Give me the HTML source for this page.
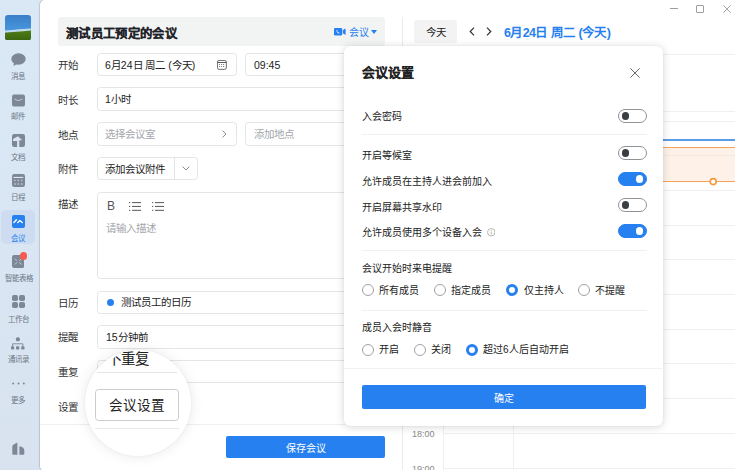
<!DOCTYPE html>
<html lang="zh-CN">
<head>
<meta charset="utf-8">
<style>
*{box-sizing:border-box;margin:0;padding:0}
html,body{width:735px;height:470px;overflow:hidden;background:#d9e4f0;font-family:"Liberation Sans",sans-serif;color:#222}
.a{position:absolute}
#side{left:0;top:0;width:40px;height:470px;background:linear-gradient(180deg,#dae8f6 0%,#d8e3ef 100%)}
.ic{position:absolute;left:12px;width:13px;height:13px}
.lb{position:absolute;left:0;width:36px;text-align:center;font-size:7.5px;line-height:8px;color:#6b7686;white-space:nowrap}
#main{left:40px;top:0;width:700px;height:471px;background:#fff;border-radius:5px;box-shadow:-1px 0 1px rgba(0,0,0,.14)}
.lab{position:absolute;left:58px;font-size:10.5px;line-height:12px;color:#333;white-space:nowrap}
.box{position:absolute;border:1px solid #e4e5e7;border-radius:3.5px;background:#fff}
.tx{position:absolute;font-size:10.5px;line-height:12px;color:#222;white-space:nowrap}
.ph{color:#a3a6ab}
.hl{position:absolute;height:1px;background:#eff0f0}
.vl{position:absolute;width:1px;background:#eeeff0}
#pop{left:344px;top:45.5px;width:318.5px;height:380px;background:#fff;border-radius:6px;box-shadow:0 1px 8px rgba(0,0,0,.16),0 0 1px rgba(0,0,0,.12)}
.pt{position:absolute;left:18px;font-size:10px;line-height:12px;color:#222;white-space:nowrap}
.tg{position:absolute;left:273.5px;width:29px;height:14.5px;border-radius:8px;border:1px solid #8f9398;background:#fff}
.tg i{position:absolute;left:3.3px;top:2.45px;width:7.6px;height:7.6px;border-radius:50%;background:#3a3d42}
.tg.on{background:#2680f0;border-color:#2680f0}
.tg.on i{left:17.2px;background:#fff}
.rd{position:absolute;width:12px;height:12px;margin:-0.2px 0 0 -0.5px;border-radius:50%;border:1px solid #9fa2a6;background:#fff}
.rd.on{border:3.7px solid #2680f0}
.rt{position:absolute;font-size:10px;line-height:12px;color:#222;white-space:nowrap}
</style>
</head>
<body>
<!-- sidebar -->
<div id="side" class="a">
  <svg class="a" style="left:5px;top:14.5px" width="26" height="25.5" viewBox="0 0 26 25.5"><defs><linearGradient id="sky" x1="0" y1="0" x2="0" y2="1"><stop offset="0" stop-color="#3a7fc8"/><stop offset="0.6" stop-color="#4796dd"/></linearGradient><linearGradient id="gr" x1="0" y1="0" x2="0" y2="1"><stop offset="0" stop-color="#4f7d16"/><stop offset="1" stop-color="#3c6410"/></linearGradient><clipPath id="cp"><rect x="0" y="0" width="26" height="25.5" rx="3"/></clipPath></defs><g clip-path="url(#cp)"><rect x="0" y="0" width="26" height="25.5" fill="url(#sky)"/><path d="M0 15.5 Q8 15 14 14.2 L26 13.5 V17 L0 17.8Z" fill="#d8e6f0" opacity="0.85"/><path d="M0 17.8 Q10 17.2 26 15.6 V25.5 H0Z" fill="url(#gr)"/></g></svg>

  <svg class="ic" style="top:53px;left:11px;width:15px;height:13px" viewBox="0 0 15 13"><ellipse cx="7.5" cy="6" rx="7.2" ry="5.8" fill="#7d8796"/><path d="M3 9.5 L2.5 13 L7 10.5Z" fill="#7d8796"/></svg>
  <div class="lb" style="top:73px">消息</div>

  <svg class="ic" style="top:94px" viewBox="0 0 13 12"><rect x="0" y="0" width="13" height="12" rx="2" fill="#7d8796"/><path d="M2.8 4.6 Q6.5 7.6 10.2 4.6" stroke="#c9d3de" stroke-width="0.9" fill="none" stroke-linecap="round"/></svg>
  <div class="lb" style="top:113px">邮件</div>

  <svg class="ic" style="top:134px" viewBox="0 0 13 13"><rect x="0" y="0" width="13" height="13" rx="2.2" fill="#7d8796"/><path d="M1 5.6 Q1 4.9 1.6 4.7 L5.9 2.3 L10.3 6.3 H7.3 V13 H5.1 V7 H1.6 Q1 7 1 6.4Z" fill="#dbe5f0"/></svg>
  <div class="lb" style="top:154px">文档</div>

  <svg class="ic" style="top:174px" viewBox="0 0 13 13"><rect x="0" y="0" width="13" height="13" rx="2.2" fill="#7d8796"/><rect x="1.3" y="2.9" width="10" height="1.1" fill="#dbe5f0"/><g fill="#b9c3cf"><rect x="2.1" y="5.7" width="1.6" height="1.4"/><rect x="5.5" y="5.7" width="1.6" height="1.4"/><rect x="8.9" y="5.7" width="1.6" height="1.4"/><rect x="2.1" y="9.2" width="1.6" height="1.6"/><rect x="5.5" y="9.2" width="1.6" height="1.6"/><rect x="8.9" y="9.2" width="1.6" height="1.6"/></g></svg>
  <div class="lb" style="top:194px">日程</div>

  <div class="a" style="left:1px;top:210px;width:34px;height:34px;border-radius:5px;background:#cddcf1"></div>
  <svg class="ic" style="top:215px" viewBox="0 0 13 13"><rect x="0" y="0" width="13" height="13" rx="2" fill="#2680f0"/><path d="M1.9 7.5 L4.4 4.8 M5.7 7.5 L7.9 5.5 L10.2 7.5" stroke="#fff" stroke-width="1.4" fill="none" stroke-linecap="round" stroke-linejoin="round"/></svg>
  <div class="lb" style="top:235px;color:#2680f0">会议</div>

  <svg class="ic" style="top:255px;left:11.8px;width:12.4px;height:13px" viewBox="0 0 12.4 13"><rect x="0" y="0" width="12.4" height="13" rx="2.2" fill="#7d8796"/><path d="M3 4 L4.9 5.5 M9.4 4 L7.5 5.5 M3 9.2 L4.9 7.6 M9.4 9.2 L7.5 7.6" stroke="#c5ced9" stroke-width="0.9" stroke-linecap="round"/></svg>
  <div class="a" style="left:19.95px;top:252.35px;width:7.5px;height:7.5px;border-radius:50%;background:#f75a4f"></div>
  <div class="lb" style="top:275px;left:-1px;width:39px">智能表格</div>

  <svg class="ic" style="top:295px" viewBox="0 0 13 13"><g fill="#7d8796"><rect x="0" y="0" width="6" height="6" rx="1.8"/><rect x="7" y="0" width="6" height="6" rx="1.8"/><rect x="0" y="7" width="6" height="6" rx="1.8"/><rect x="7" y="7" width="6" height="6" rx="1.8"/></g></svg>
  <div class="lb" style="top:316px">工作台</div>

  <svg class="ic" style="top:336.5px;left:11px;width:14px;height:13px" viewBox="0 0 14 13"><g fill="#7d8796"><rect x="4.9" y="0.3" width="4" height="4" rx="1.6"/><rect x="0" y="9.3" width="3.2" height="3.3" rx="0.8"/><rect x="5" y="9.3" width="3.3" height="3.3" rx="0.8"/><rect x="10.2" y="9.3" width="3.3" height="3.3" rx="0.8"/></g><path d="M1.6 9.5 V6.8 H11.9 V9.5" stroke="#7d8796" stroke-width="0.9" fill="none"/></svg>
  <div class="lb" style="top:356px">通讯录</div>

  <svg class="ic" style="top:377px" viewBox="0 0 13 4"><g fill="#7d8796"><circle cx="1.2" cy="2" r="1"/><circle cx="6.5" cy="2" r="1"/><circle cx="11.8" cy="2" r="1"/></g></svg>
  <div class="lb" style="top:397px">更多</div>

  <svg class="ic" style="top:442px;left:11.7px" viewBox="0 0 13 13"><path d="M0.3 4.6 Q0.5 3.2 2 2.3 L5.4 0.6 V12.7 H1.3 Q0.3 12.7 0.3 11.7Z M7.4 4.3 Q12.3 4.9 12.3 8.6 V11.7 Q12.3 12.7 11.3 12.7 H7.4Z" fill="#7d8796"/></svg>
</div>

<div id="main" class="a"></div>

<!-- form panel -->
<div class="a" style="left:58px;top:17px;width:327px;height:29px;border-radius:3px;background:#f2f3f3"></div>
<div class="tx" style="left:66px;top:26.6px;font-size:12.4px;letter-spacing:0.35px;line-height:15px;font-weight:bold;-webkit-text-stroke:0.15px #1f2329;color:#1f2329">测试员工预定的会议</div>
<svg class="a" style="left:334px;top:28px" width="12" height="7.5" viewBox="0 0 12 7.5"><rect x="0" y="0" width="8.2" height="7.5" rx="1.3" fill="#2680f0"/><path d="M8.7 3.75 Q8.7 1.3 11.6 0.8 V6.7 Q8.7 6.2 8.7 3.75Z" fill="#2680f0"/><path d="M2.6 1.9 Q2.1 2.5 2.9 3.9 Q3.9 5.4 5.1 5.6 L5.6 5.1 L4.7 4.3 L4.3 4.6 Q3.5 4 3.3 3.2 L3.6 2.8 Z" fill="#fff"/></svg>
<div class="tx" style="left:349px;top:26.8px;font-size:10px;color:#2680f0">会议</div>
<svg class="a" style="left:371px;top:30px" width="6" height="4" viewBox="0 0 6 4"><path d="M0 0 H6 L3 4Z" fill="#2680f0"/></svg>

<div class="lab" style="top:59px">开始</div>
<div class="box" style="left:97px;top:53px;width:140px;height:23px"></div>
<div class="tx" style="left:105px;top:59px">6月24日 周二 (今天)</div>
<svg class="a" style="left:217px;top:60px" width="10" height="10" viewBox="0 0 10 10"><rect x="0.45" y="0.45" width="8.9" height="8.9" rx="1.6" fill="none" stroke="#5a5d62" stroke-width="0.9"/><path d="M0.5 2.5 H9.3" stroke="#5a5d62" stroke-width="1"/><g fill="#6a6d72"><circle cx="2.5" cy="4.5" r="0.6"/><circle cx="4.6" cy="4.5" r="0.6"/><circle cx="6.6" cy="4.5" r="0.6"/><circle cx="2.5" cy="6.5" r="0.6"/><circle cx="4.6" cy="6.5" r="0.6"/><circle cx="6.6" cy="6.5" r="0.6"/></g></svg>
<div class="box" style="left:245px;top:53px;width:140px;height:23px"></div>
<div class="tx" style="left:254px;top:59px">09:45</div>

<div class="lab" style="top:94px">时长</div>
<div class="box" style="left:97px;top:87px;width:288px;height:24px"></div>
<div class="tx" style="left:105px;top:93px">1小时</div>

<div class="lab" style="top:129px">地点</div>
<div class="box" style="left:97px;top:122px;width:140px;height:24px"></div>
<div class="tx ph" style="left:105px;top:128px">选择会议室</div>
<svg class="a" style="left:222px;top:130px" width="5" height="8" viewBox="0 0 5 8"><path d="M0.7 0.7 L4 4 L0.7 7.3" stroke="#8a8d92" stroke-width="1" fill="none"/></svg>
<div class="box" style="left:245px;top:122px;width:140px;height:24px"></div>
<div class="tx ph" style="left:254px;top:128px">添加地点</div>

<div class="lab" style="top:163px">附件</div>
<div class="box" style="left:97px;top:157px;width:101px;height:23px"></div>
<div class="vl" style="left:174px;top:158px;height:21px;background:#e4e5e7"></div>
<div class="tx" style="left:105px;top:163px">添加会议附件</div>
<svg class="a" style="left:182px;top:166px" width="8" height="5" viewBox="0 0 8 5"><path d="M0.7 0.7 L4 4 L7.3 0.7" stroke="#8a8d92" stroke-width="1" fill="none"/></svg>

<div class="lab" style="top:198px">描述</div>
<div class="box" style="left:97px;top:192px;width:288px;height:87px"></div>
<div class="tx" style="left:107px;top:200px;font-size:12px;line-height:13px;color:#555">B</div>
<svg class="a" style="left:129px;top:202px" width="12" height="9" viewBox="0 0 12 9"><g fill="#666"><rect x="0" y="0" width="1.3" height="1.1"/><rect x="0" y="3.9" width="1.3" height="1.1"/><rect x="0" y="7.8" width="1.3" height="1.1"/><rect x="3" y="0" width="9" height="1.1"/><rect x="3" y="3.9" width="9" height="1.1"/><rect x="3" y="7.8" width="9" height="1.1"/></g></svg>
<svg class="a" style="left:152px;top:202px" width="12" height="9" viewBox="0 0 12 9"><g fill="#666"><rect x="0" y="0" width="1.3" height="1.1"/><rect x="0" y="3.9" width="1.3" height="1.1"/><rect x="0" y="7.8" width="1.3" height="1.1"/><rect x="3" y="0" width="9" height="1.1"/><rect x="3" y="3.9" width="9" height="1.1"/><rect x="3" y="7.8" width="9" height="1.1"/></g></svg>
<div class="tx ph" style="left:106px;top:222px">请输入描述</div>

<div class="lab" style="top:297px">日历</div>
<div class="box" style="left:97px;top:291px;width:288px;height:23px"></div>
<div class="a" style="left:107px;top:299px;width:7px;height:7px;border-radius:50%;background:#2680f0"></div>
<div class="tx" style="left:121px;top:296px">测试员工的日历</div>

<div class="lab" style="top:331px">提醒</div>
<div class="box" style="left:97px;top:325px;width:288px;height:24px"></div>
<div class="tx" style="left:106px;top:331px">15分钟前</div>

<div class="lab" style="top:366px">重复</div>
<div class="box" style="left:97px;top:360px;width:288px;height:23px"></div>

<div class="lab" style="top:401px">设置</div>

<div class="hl" style="left:40px;top:424px;width:362px;background:#eeeff0"></div>
<div class="a" style="left:226.3px;top:435.6px;width:158.4px;height:22.4px;border-radius:2px;background:#2680f0"></div>
<div class="tx" style="left:226px;top:442.6px;width:159px;text-align:center;color:#fff;font-size:10px">保存会议</div>

<!-- divider -->
<div class="vl" style="left:402px;top:17px;height:453px;background:#ebecee"></div>

<!-- calendar -->
<div class="a" style="left:414px;top:20px;width:43px;height:23px;border-radius:3px;background:#f3f3f4"></div>
<div class="tx" style="left:414px;top:26px;width:43px;text-align:center;font-size:10.5px">今天</div>
<svg class="a" style="left:469px;top:27px" width="6" height="9" viewBox="0 0 6 9"><path d="M5 0.7 L1.2 4.5 L5 8.3" stroke="#333" stroke-width="1.2" fill="none"/></svg>
<svg class="a" style="left:486px;top:27px" width="6" height="9" viewBox="0 0 6 9"><path d="M1 0.7 L4.8 4.5 L1 8.3" stroke="#333" stroke-width="1.2" fill="none"/></svg>
<div class="tx" style="left:504px;top:25.6px;font-size:12.5px;line-height:14px;font-weight:bold;letter-spacing:-0.6px;color:#2680f0">6月24日 周二 (今天)</div>

<div class="hl" style="left:403px;top:54px;width:332px"></div>
<div class="hl" style="left:403px;top:111px;width:332px"></div>
<div class="hl" style="left:443px;top:121px;width:292px"></div>
<div class="hl" style="left:443px;top:190px;width:292px"></div>
<div class="hl" style="left:443px;top:225px;width:292px"></div>
<div class="hl" style="left:443px;top:259px;width:292px"></div>
<div class="hl" style="left:443px;top:294px;width:292px"></div>
<div class="hl" style="left:443px;top:329px;width:292px"></div>
<div class="hl" style="left:443px;top:363px;width:292px"></div>
<div class="hl" style="left:443px;top:398px;width:292px"></div>
<div class="hl" style="left:443px;top:433px;width:292px"></div>
<div class="hl" style="left:443px;top:468px;width:292px"></div>
<div class="vl" style="left:443px;top:111px;height:359px"></div>
<div class="vl" style="left:513px;top:111px;height:359px"></div>
<div class="a" style="left:443px;top:147px;width:292px;height:34px;background:#fdf1e8"></div>
<div class="hl" style="left:443px;top:155px;width:292px;background:#f1e9e2"></div>
<div class="hl" style="left:443px;top:147px;width:292px;background:#f6a35a"></div>
<div class="hl" style="left:443px;top:181px;width:292px;background:#f6a35a"></div>
<svg class="a" style="left:708px;top:176px" width="10" height="11" viewBox="0 0 10 11"><circle cx="5.2" cy="5.6" r="3" fill="#fff" stroke="#f5983f" stroke-width="1.6"/></svg>
<div class="hl" style="left:443px;top:139px;width:292px;height:2px;background:#5a9de8"></div>
<div class="tx" style="left:412px;top:429px;font-size:9px;line-height:10px;color:#888">18:00</div>
<div class="tx" style="left:412px;top:464px;font-size:9px;line-height:10px;color:#888">19:00</div>

<!-- window controls -->
<div class="a" style="left:670.4px;top:8px;width:7.6px;height:1px;background:#9a9da2"></div>
<div class="a" style="left:696.3px;top:5.2px;width:7.7px;height:7.4px;border:1px solid #9a9da2;border-radius:1px"></div>
<svg class="a" style="left:722.5px;top:5px" width="8" height="8" viewBox="0 0 8 8"><path d="M0.4 0.4 L7.6 7.6 M7.6 0.4 L0.4 7.6" stroke="#9a9da2" stroke-width="0.9"/></svg>

<!-- popup -->
<div id="pop" class="a">
  <div class="pt" style="top:19.6px;font-size:13px;line-height:15px;font-weight:bold;-webkit-text-stroke:0.12px #222">会议设置</div>
  <svg class="a" style="left:286.2px;top:22.1px" width="10" height="10" viewBox="0 0 10 10"><path d="M0.4 0.4 L9.6 9.6 M9.6 0.4 L0.4 9.6" stroke="#666a70" stroke-width="1"/></svg>

  <div class="pt" style="top:65px">入会密码</div>
  <div class="tg" style="top:63px"><i></i></div>
  <div class="hl" style="left:18px;top:88px;width:285px"></div>

  <div class="pt" style="top:104px">开启等候室</div>
  <div class="tg" style="top:100px"><i></i></div>
  <div class="pt" style="top:130px">允许成员在主持人进会前加入</div>
  <div class="tg on" style="top:126px"><i></i></div>
  <div class="pt" style="top:156px">开启屏幕共享水印</div>
  <div class="tg" style="top:152px"><i></i></div>
  <div class="pt" style="top:181.7px">允许成员使用多个设备入会</div>
  <svg class="a" style="left:142.5px;top:182.8px" width="8.5" height="8.5" viewBox="0 0 8 8"><circle cx="4" cy="4" r="3.5" fill="none" stroke="#aaa" stroke-width="0.8"/><path d="M4 3.3 V6" stroke="#aaa" stroke-width="0.8"/><circle cx="4" cy="2.2" r="0.5" fill="#aaa"/></svg>
  <div class="tg on" style="top:178px"><i></i></div>
  <div class="hl" style="left:18px;top:204px;width:285px"></div>

  <div class="pt" style="top:217.5px">会议开始时来电提醒</div>
  <div class="rd" style="left:18px;top:239px"></div><div class="rt" style="left:35px;top:239px">所有成员</div>
  <div class="rd" style="left:90px;top:239px"></div><div class="rt" style="left:107px;top:239px">指定成员</div>
  <div class="rd on" style="left:162px;top:239px"></div><div class="rt" style="left:180px;top:239px">仅主持人</div>
  <div class="rd" style="left:234px;top:239px"></div><div class="rt" style="left:251px;top:239px">不提醒</div>
  <div class="hl" style="left:18px;top:264px;width:285px"></div>

  <div class="pt" style="top:276.5px">成员入会时静音</div>
  <div class="rd" style="left:18px;top:298.5px"></div><div class="rt" style="left:35px;top:298.5px">开启</div>
  <div class="rd" style="left:70px;top:298.5px"></div><div class="rt" style="left:87px;top:298.5px">关闭</div>
  <div class="rd on" style="left:122px;top:298.5px"></div><div class="rt" style="left:139px;top:298.5px">超过6人后自动开启</div>

  <div class="hl" style="left:0;top:322px;width:318px"></div>
  <div class="a" style="left:17.5px;top:339.5px;width:284px;height:23.5px;border-radius:2px;background:#2680f0"></div>
  <div class="rt" style="left:17.5px;top:347.2px;width:284px;text-align:center;color:#fff">确定</div>
</div>

<!-- magnifier -->
<div class="a" style="left:85px;top:350px;width:105.5px;height:105.5px;border-radius:50%;background:#fff;box-shadow:0 0 3px rgba(0,0,0,.06),0 0 14px rgba(0,0,0,.09);overflow:hidden">
  <div class="tx" style="left:22.2px;top:0.6px;font-size:14.5px;line-height:16px;color:#222"><span style="display:inline-block;clip-path:polygon(0 12.4px,15px 1.1px,15px 16px,0 16px)">不</span>重复</div>
  <div class="hl" style="left:12px;top:22px;width:80px;background:#e3e5e8"></div>
  <div class="a" style="left:10px;top:39px;width:83.7px;height:31.7px;border:1px solid #c9ccd0;border-radius:3.5px"></div>
  <div class="tx" style="left:10px;top:48.3px;width:83.7px;text-align:center;font-size:13.6px;line-height:16px;color:#222">会议设置</div>
  <div class="hl" style="left:10px;top:78px;width:84px;background:#e8eaec"></div>
</div>
</body>
</html>
